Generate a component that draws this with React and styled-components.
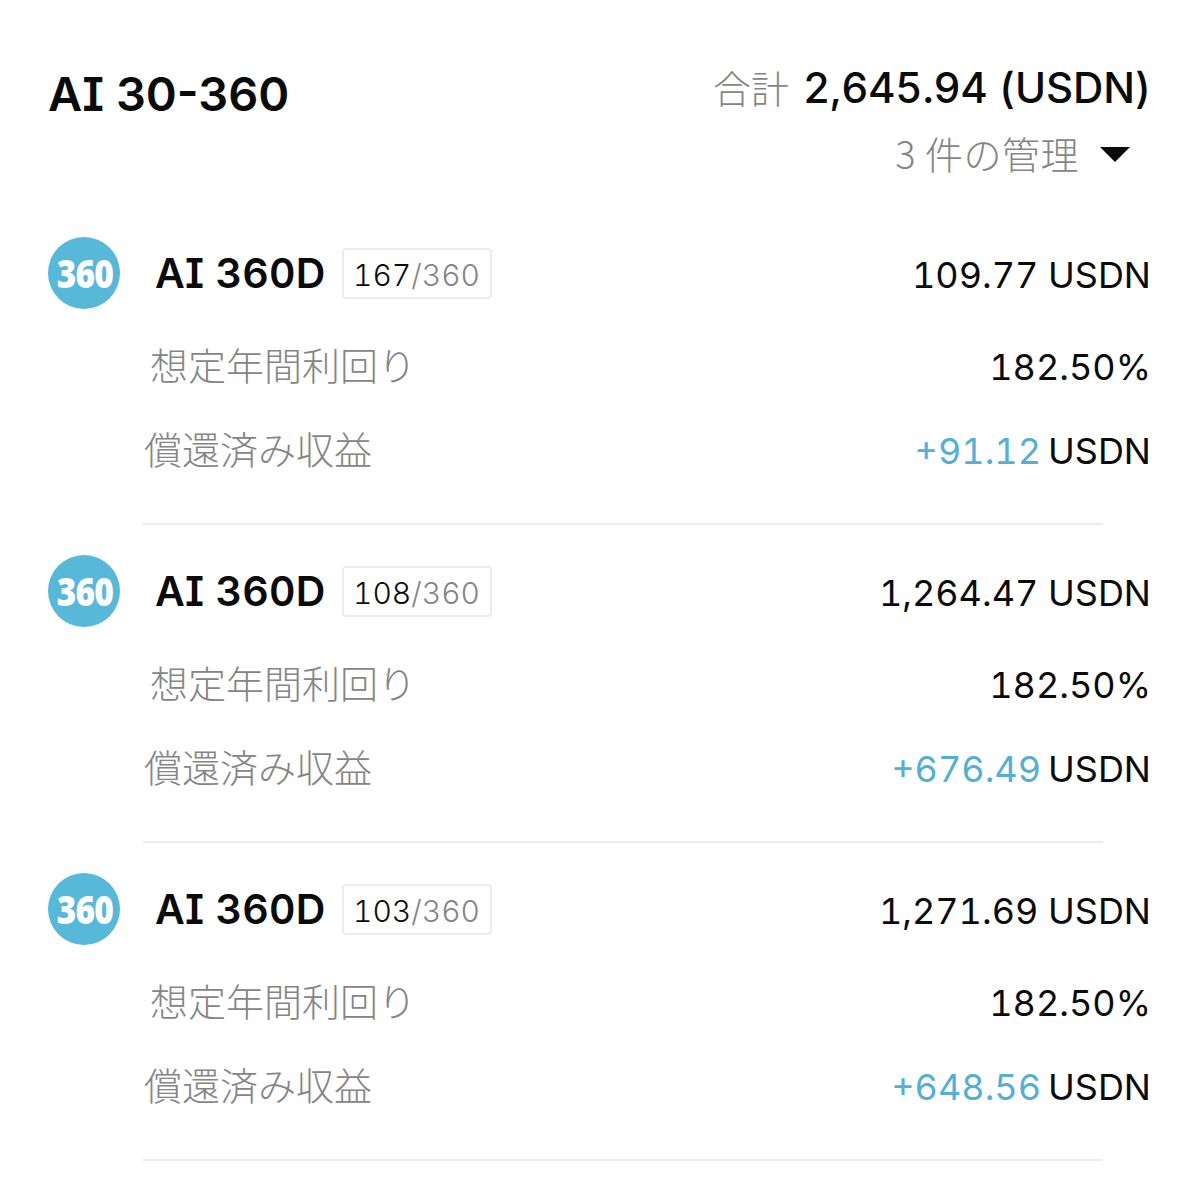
import React from "react";
import styled, { createGlobalStyle } from "styled-components";

const Global = createGlobalStyle`
  html, body { margin: 0; padding: 0; background: #fff; }
  body {
    font-family: "Inter", "Noto Sans CJK JP", sans-serif;
    font-feature-settings: "cv08", "tnum";
    color: #0b0b0b;
  }
`;

const Page = styled.div`
  width: 1199px;
  height: 1200px;
  box-sizing: border-box;
  padding: 62px 48px 0 48px;
  overflow: hidden;
`;

const Header = styled.header`
  display: flex;
  justify-content: space-between;
  align-items: flex-start;
  height: 175px;
`;

const Title = styled.h1`
  margin: 0;
  font-size: 47px;
  line-height: 64px;
  font-weight: 600;
  font-feature-settings: "cv08";
`;

const Summary = styled.div`
  display: flex;
  flex-direction: column;
  align-items: flex-end;
  gap: 16px;
`;

const TotalLine = styled.div`
  display: flex;
  align-items: baseline;
  gap: 14px;
  height: 50px;
  line-height: 50px;
`;

const TotalLabel = styled.span`
  font-family: "Noto Sans CJK JP", sans-serif;
  font-weight: 300;
  font-size: 38px;
  color: #858585;
`;

const TotalValue = styled.span`
  font-size: 42px;
  font-weight: 500;
  letter-spacing: -0.15px;
`;

const ManageButton = styled.div`
  display: flex;
  align-items: center;
  gap: 21px;
  padding-right: 21px;
  font-family: "Noto Sans CJK JP", sans-serif;
  font-weight: 300;
  font-size: 38px;
  letter-spacing: 0.5px;
  line-height: 50px;
  color: #858585;
`;

const Caret = styled.span`
  width: 0;
  height: 0;
  margin-top: 2px;
  border-left: 15px solid transparent;
  border-right: 15px solid transparent;
  border-top: 15px solid #0b0b0b;
`;

const Item = styled.section`
  margin-bottom: 30px;
`;

const TopRow = styled.div`
  display: flex;
  align-items: center;
  height: 72px;
`;

const Badge = styled.div`
  width: 72px;
  height: 72px;
  border-radius: 50%;
  background: #58b8da;
  display: flex;
  align-items: center;
  justify-content: center;
  flex: none;
`;

const BadgeText = styled.span`
  color: #fff;
  font-family: "Open Sans", sans-serif;
  font-feature-settings: normal;
  font-weight: 800;
  font-size: 38px;
  letter-spacing: -1px;
  margin-left: 2px;
  transform: scaleX(0.88);
`;

const Name = styled.span`
  margin-left: 35px;
  font-size: 41px;
  font-weight: 600;
  letter-spacing: 0.2px;
`;

const Progress = styled.span`
  margin-left: 16px;
  box-sizing: border-box;
  width: 150px;
  height: 51px;
  padding-top: 4px;
  border: 2px solid #ececec;
  border-radius: 4px;
  display: flex;
  align-items: center;
  justify-content: center;
  font-size: 30px;
  font-weight: 300;
  color: #858585;
`;

const Done = styled.span`
  color: #0b0b0b;
`;

const Amount = styled.span`
  margin-left: auto;
  font-size: 36px;
  font-weight: 400;
  color: #0b0b0b;
  padding-top: ${(p) => p.$drop || 0}px;
`;

const DetailRow = styled.div`
  display: flex;
  justify-content: space-between;
  align-items: center;
  height: 50px;
  margin-top: ${(p) => p.$gap}px;
`;

const DetailLabel = styled.span`
  font-family: "Noto Sans CJK JP", sans-serif;
  font-weight: 300;
  font-size: 38px;
  color: #858585;
  padding-left: ${(p) => p.$indent}px;
  padding-bottom: 8px;
`;

const Accent = styled.span`
  color: #54afd2;
  margin-right: 7px;
`;

const Divider = styled.hr`
  border: 0;
  height: 2px;
  background: #ececec;
  margin: 47px 48px 0 95px;
`;

const items = [
  { days: 167, amount: "109.77", gain: "+91.12" },
  { days: 108, amount: "1,264.47", gain: "+676.49" },
  { days: 103, amount: "1,271.69", gain: "+648.56" },
];

export default function App() {
  return (
    <Page>
      <Global />
      <Header>
        <Title>AI 30-360</Title>
        <Summary>
          <TotalLine>
            <TotalLabel>合計</TotalLabel>
            <TotalValue>2,645.94 (USDN)</TotalValue>
          </TotalLine>
          <ManageButton>
            3 件の管理
            <Caret />
          </ManageButton>
        </Summary>
      </Header>
      {items.map((it) => (
        <Item key={it.days}>
          <TopRow>
            <Badge>
              <BadgeText>360</BadgeText>
            </Badge>
            <Name>AI 360D</Name>
            <Progress>
              <Done>{it.days}</Done>/360
            </Progress>
            <Amount $drop={4}>{it.amount} USDN</Amount>
          </TopRow>
          <DetailRow $gap={33}>
            <DetailLabel $indent={102}>想定年間利回り</DetailLabel>
            <Amount>182.50%</Amount>
          </DetailRow>
          <DetailRow $gap={34}>
            <DetailLabel $indent={96}>償還済み収益</DetailLabel>
            <Amount>
              <Accent>{it.gain}</Accent>USDN
            </Amount>
          </DetailRow>
          <Divider />
        </Item>
      ))}
    </Page>
  );
}
